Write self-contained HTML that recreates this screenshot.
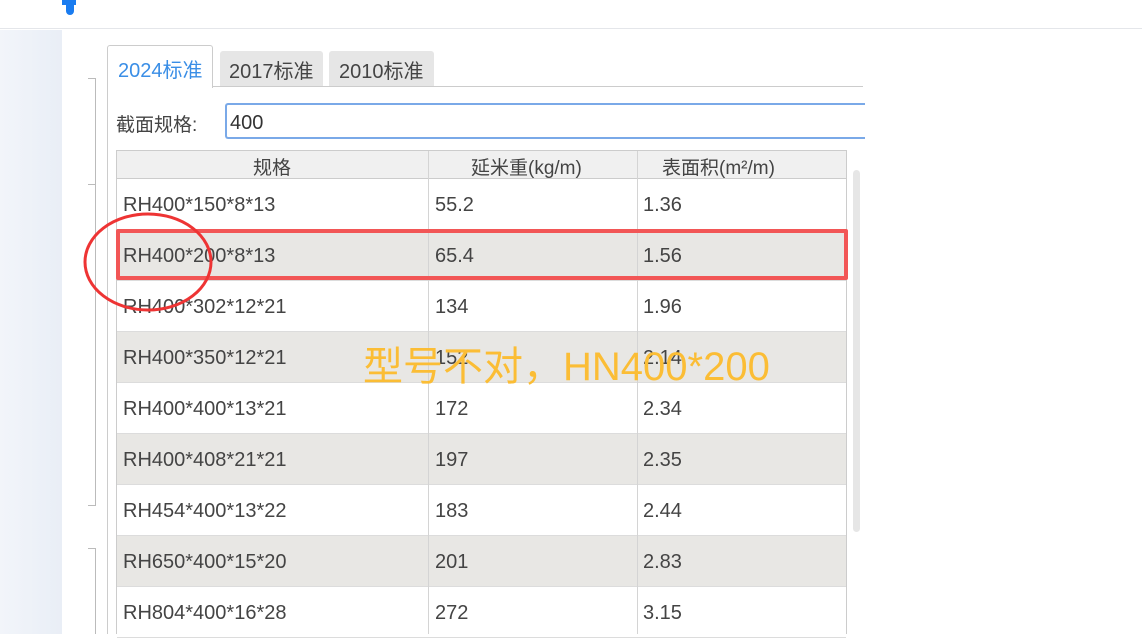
<!DOCTYPE html>
<html><head><meta charset="utf-8"><style>
*{margin:0;padding:0;box-sizing:border-box}
body{width:1142px;height:634px;overflow:hidden;background:#fff;position:relative;font-family:"Liberation Sans","Noto Sans CJK SC",sans-serif;color:#333}
.a{position:absolute}
.row{position:absolute;left:117px;width:729px;height:51px;border-bottom:1px solid #dcdcdc;font-size:20px;color:#444}
.row span{position:absolute;top:15px}
.g{background:#e8e7e4}
</style></head><body>
<div class="a" style="left:0;top:0;width:1142px;height:29px;background:#fff;border-bottom:1px solid #e4e6ea"></div>
<div class="a" style="left:66px;top:0;width:8px;height:15px;background:#1a7cf0;border-radius:0 0 4px 4px"></div>
<div class="a" style="left:62px;top:0;width:14px;height:5px;background:#1a7cf0"></div>
<div class="a" style="left:0;top:30px;width:62px;height:604px;background:linear-gradient(90deg,#f2f5fa,#e9eef6)"></div>
<div class="a" style="left:88px;top:78px;width:8px;height:1px;background:#bbb"></div>
<div class="a" style="left:95px;top:78px;width:1px;height:428px;background:#bbb"></div>
<div class="a" style="left:88px;top:184px;width:8px;height:1px;background:#bbb"></div>
<div class="a" style="left:88px;top:505px;width:8px;height:1px;background:#bbb"></div>
<div class="a" style="left:88px;top:548px;width:8px;height:1px;background:#bbb"></div>
<div class="a" style="left:95px;top:548px;width:1px;height:86px;background:#bbb"></div>
<div class="a" style="left:107px;top:86px;width:756px;height:1px;background:#ccc"></div>
<div class="a" style="left:107px;top:86px;width:1px;height:548px;background:#ccc"></div>
<div class="a" style="left:107px;top:45px;width:106px;height:43px;background:#fff;border:1px solid #ccc;border-bottom:none;border-radius:3px 3px 0 0;color:#3a8ee6;font-size:20px;padding:8px 0 0 10px">2024标准</div>
<div class="a" style="left:220px;top:51px;width:103px;height:35px;background:#e6e6e6;border-radius:3px 3px 0 0;color:#444;font-size:20px;padding:4px 0 0 9px">2017标准</div>
<div class="a" style="left:329px;top:51px;width:105px;height:35px;background:#e6e6e6;border-radius:3px 3px 0 0;color:#444;font-size:20px;padding:4px 0 0 10px">2010标准</div>
<div class="a" style="left:116px;top:110px;font-size:19px;color:#444">截面规格:</div>
<div class="a" style="left:225px;top:103px;width:640px;height:36px;border:2px solid #7aa9e8;border-right:none;border-radius:3px 0 0 3px;font-size:20px;padding:7px 0 0 3px;color:#333">400</div>
<div class="a" style="left:116px;top:150px;width:731px;height:484px;border:1px solid #ccc;border-bottom:none"></div>
<div class="a" style="left:117px;top:151px;width:729px;height:28px;background:#f0f0f0;border-bottom:1px solid #ccc;font-size:19px;color:#444">
<span class="a" style="left:136px;top:2px">规格</span>
<span class="a" style="left:354px;top:2px">延米重(kg/m)</span>
<span class="a" style="left:545px;top:2px">表面积(m²/m)</span>
</div>
<div class="row" style="top:179px"><span style="left:6px">RH400*150*8*13</span><span style="left:318px">55.2</span><span style="left:526px">1.36</span></div>
<div class="row g" style="top:230px"><span style="left:6px">RH400*200*8*13</span><span style="left:318px">65.4</span><span style="left:526px">1.56</span></div>
<div class="row" style="top:281px"><span style="left:6px">RH400*302*12*21</span><span style="left:318px">134</span><span style="left:526px">1.96</span></div>
<div class="row g" style="top:332px"><span style="left:6px">RH400*350*12*21</span><span style="left:318px">152</span><span style="left:526px">2.14</span></div>
<div class="row" style="top:383px"><span style="left:6px">RH400*400*13*21</span><span style="left:318px">172</span><span style="left:526px">2.34</span></div>
<div class="row g" style="top:434px"><span style="left:6px">RH400*408*21*21</span><span style="left:318px">197</span><span style="left:526px">2.35</span></div>
<div class="row" style="top:485px"><span style="left:6px">RH454*400*13*22</span><span style="left:318px">183</span><span style="left:526px">2.44</span></div>
<div class="row g" style="top:536px"><span style="left:6px">RH650*400*15*20</span><span style="left:318px">201</span><span style="left:526px">2.83</span></div>
<div class="row" style="top:587px"><span style="left:6px">RH804*400*16*28</span><span style="left:318px">272</span><span style="left:526px">3.15</span></div>
<div class="a" style="left:428px;top:151px;width:1px;height:483px;background:#d4d4d4"></div>
<div class="a" style="left:637px;top:151px;width:1px;height:483px;background:#d4d4d4"></div>
<div class="a" style="left:853px;top:170px;width:7px;height:362px;background:#e6e6e6;border-radius:4px"></div>
<div class="a" style="left:116px;top:229px;width:732px;height:51px;border:4px solid #f25656;border-radius:2px"></div>
<svg class="a" style="left:0;top:0" width="1142" height="634"><ellipse cx="148" cy="262" rx="63" ry="48" fill="none" stroke="#ee3434" stroke-width="3"/></svg>
<div class="a" style="left:363px;top:334px;font-size:40px;color:#fbbd35;white-space:nowrap">型号不对，HN400*200</div>
</body></html>
